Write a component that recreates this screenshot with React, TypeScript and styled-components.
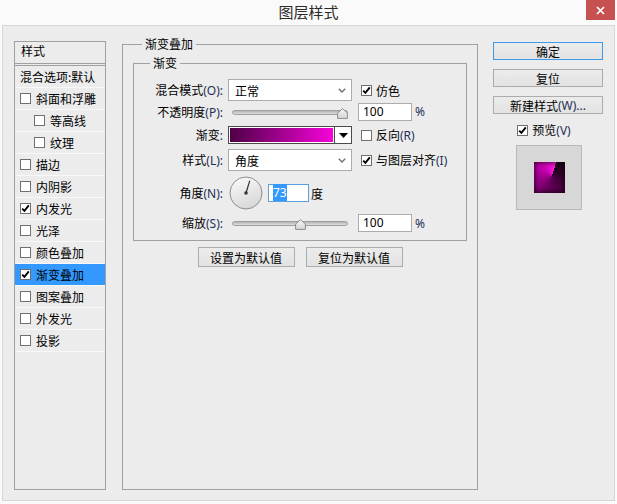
import React from 'react';
import styled, { createGlobalStyle } from 'styled-components';

const GlobalStyle = createGlobalStyle`
  html, body {
    margin: 0;
    padding: 0;
    background: #fafafa;
  }
  body {
    width: 617px;
    height: 504px;
    overflow: hidden;
    font-family: 'Noto Sans CJK SC', 'Noto Sans', sans-serif;
    font-size: 12px;
    color: #000;
  }
  * {
    box-sizing: border-box;
  }
`;

const Frame = styled.div`
  width: 617px;
  height: 504px;
  display: flex;
  flex-direction: column;
`;

const TitleBar = styled.div`
  height: 25px;
  display: grid;
  grid-template-columns: 1fr auto 1fr;
  align-items: start;
`;

const Title = styled.div`
  grid-column: 2;
  font-size: 15px;
  line-height: 24px;
  color: #2b2b2b;
`;

const CloseButton = styled.div`
  justify-self: end;
  width: 29px;
  height: 20px;
  margin-right: 2px;
  background: #c75050;
  display: flex;
  align-items: center;
  justify-content: center;
`;

const Body = styled.div`
  flex: 1;
  margin: 0 2px 3px;
  border: 1px solid #d6d6d6;
  background: #ececec;
  display: flex;
  align-items: flex-start;
  padding: 10px 0 0 11px;
`;

/* left list of effects */

const StyleList = styled.div`
  width: 92px;
  height: 449px;
  margin-top: 5px;
  border: 1px solid #a0a0a0;
  display: flex;
  flex-direction: column;
  overflow: hidden;
`;

const ListHeader = styled.div`
  height: 24px;
  line-height: 18px;
  padding-left: 6px;
  border-bottom: 3px double #a0a0a0;
`;

const ListRow = styled.div<{ $indent: number; $selected?: boolean }>`
  height: 22px;
  flex-shrink: 0;
  display: flex;
  align-items: center;
  gap: 5px;
  padding-left: ${p => p.$indent}px;
  border-bottom: 1px solid #f8f8f8;
  background: ${p => (p.$selected ? '#3399ff' : 'transparent')};
  white-space: nowrap;
  overflow: hidden;
`;

const Box = styled.span`
  width: 11px;
  height: 11px;
  flex-shrink: 0;
  border: 1px solid #707070;
  background: #fff;
  display: flex;
  align-items: center;
  justify-content: center;
`;

// accelerator keys and other latin bits, drawn in a latin face so they sit tight
const Acc = styled.span`
  font-family: 'Noto Sans', 'Liberation Sans', sans-serif;
  color: #1f2f55;
`;

const CheckBox = ({ checked }: { checked?: boolean }) => (
  <Box>
    {checked && (
      <svg width="9" height="9" viewBox="0 0 9 9">
        <path d="M1.2 4.6 L3.4 6.9 L7.8 1.4" fill="none" stroke="#000" strokeWidth="1.9" />
      </svg>
    )}
  </Box>
);

/* fieldsets */

const EffectGroup = styled.fieldset`
  margin: 0 0 0 16px;
  padding: 0 10px;
  width: 356px;
  height: 454px;
  min-inline-size: 0;
  border: 1px solid #a0a0a0;
`;

const GradientGroup = styled.fieldset`
  margin: 3px 0 0;
  padding: 8px 0;
  min-inline-size: 0;
  border: 1px solid #a0a0a0;
`;

const GroupLegend = styled.legend<{ $offset: number }>`
  margin-left: ${p => p.$offset}px;
  padding: 0 3px;
  font-size: 12px;
  line-height: 16px;
`;

const FormGrid = styled.div`
  display: grid;
  grid-template-columns: 94px 130px 1fr;
  grid-template-rows: 22px 21px 26px 24px 42px 18px;
  align-items: center;
`;

const FieldLabel = styled.div`
  text-align: right;
  padding-right: 5px;
  white-space: nowrap;
`;

const Cell = styled.div<{ $gap?: number }>`
  display: flex;
  align-items: center;
  gap: ${p => p.$gap ?? 3}px;
  white-space: nowrap;
`;

const Select = styled.div`
  width: 124px;
  height: 22px;
  background: #fff;
  border: 1px solid #acacac;
  display: flex;
  align-items: center;
  justify-content: space-between;
  padding: 0 5px 0 6px;
`;

const Chevron = () => (
  <svg width="8" height="5" viewBox="0 0 8 5">
    <path d="M0.8 0.8 L4 4 L7.2 0.8" fill="none" stroke="#6d6d6d" strokeWidth="1.3" />
  </svg>
);

const Slider = styled.div`
  position: relative;
  width: 116px;
  height: 12px;
  margin: 4px 0 0 4px;
`;

const Track = styled.div`
  margin-top: 2px;
  height: 5px;
  border-radius: 3px;
  border: 1px solid #a0a0a0;
  background: linear-gradient(#b4b4b4, #dedede);
`;

const Thumb = styled.svg`
  position: absolute;
  top: 0;
`;

const SliderControl = ({ pos }: { pos: number }) => (
  <Slider>
    <Track />
    <Thumb width="11" height="11" viewBox="0 0 11 11" style={{ left: `${pos * (116 - 11)}px` }}>
      <defs>
        <linearGradient id="thumbFill" x1="0" y1="0" x2="0" y2="1">
          <stop offset="0" stopColor="#f4f4f4" />
          <stop offset="1" stopColor="#d6d6d6" />
        </linearGradient>
      </defs>
      <polygon
        points="5.5,0.6 10.4,5 10.4,10.4 0.6,10.4 0.6,5"
        fill="url(#thumbFill)"
        stroke="#8c8c8c"
        strokeWidth="1"
      />
    </Thumb>
  </Slider>
);

const NumberBox = styled.div<{ $width: number; $focused?: boolean }>`
  width: ${p => p.$width}px;
  height: 18px;
  background: #fff;
  border: 1px solid ${p => (p.$focused ? '#5b9ee0' : '#acacac')};
  line-height: 16px;
  padding-left: 4px;
  font-family: 'Noto Sans', 'Liberation Sans', sans-serif;
`;

const Selected = styled.span`
  background: #3399ff;
  color: #fff;
`;

const GradientPicker = styled.div`
  width: 124px;
  height: 18px;
  display: flex;
  border: 1px solid #4a4a4a;
`;

const GradientBar = styled.div`
  flex: 1;
  border: 1px solid #fff;
  background: linear-gradient(to right, #4e0046, #f604da);
`;

const GradientArrow = styled.div`
  width: 17px;
  border-left: 1px solid #4a4a4a;
  background: #fff;
  display: flex;
  align-items: center;
  justify-content: center;
`;

const CheckLabel = styled.div`
  display: flex;
  align-items: center;
  gap: 4px;
  margin-left: 3px;
  white-space: nowrap;
`;

const Unit = styled.span`
  margin-left: -3px;
`;

const AngleDial = ({ angle }: { angle: number }) => {
  const r = (angle * Math.PI) / 180;
  const x = 17 + Math.cos(r) * 13;
  const y = 17 - Math.sin(r) * 13;
  return (
    <svg width="34" height="34" viewBox="0 0 34 34" style={{ marginLeft: 1 }}>
      <defs>
        <linearGradient id="dialFill" x1="0" y1="0" x2="0.4" y2="1">
          <stop offset="0" stopColor="#fbfbfb" />
          <stop offset="1" stopColor="#d9d9d9" />
        </linearGradient>
      </defs>
      <circle cx="17" cy="17" r="16" fill="url(#dialFill)" stroke="#8d8d8d" />
      <line x1="17" y1="17" x2={x} y2={y} stroke="#333" strokeWidth="1.2" />
      <circle cx="17" cy="17" r="1.8" fill="#333" />
    </svg>
  );
};

const ButtonRow = styled.div`
  display: flex;
  justify-content: center;
  gap: 11px;
  margin-top: 6px;
`;

const DialogButton = styled.div<{ $width: number; $height?: number; $primary?: boolean }>`
  width: ${p => p.$width}px;
  height: ${p => p.$height ?? 18}px;
  border: 1px solid ${p => (p.$primary ? '#3c9ae8' : '#acacac')};
  background: linear-gradient(#ececec, #e2e2e2);
  display: flex;
  align-items: center;
  justify-content: center;
  white-space: nowrap;
`;

/* right column */

const SideColumn = styled.div`
  width: 110px;
  margin: 6px 0 0 15px;
  display: flex;
  flex-direction: column;
  align-items: center;
  gap: 9px;
`;

const PreviewCheck = styled.div`
  display: flex;
  align-items: center;
  gap: 4px;
  height: 14px;
  margin-right: 8px;
`;

const PreviewFrame = styled.div`
  width: 66px;
  height: 65px;
  margin: -1px 0 0 2px;
  background: #d7d7d7;
  border: 1px solid #b8b8b8;
  display: flex;
  align-items: center;
  justify-content: center;
`;

const PreviewSwatch = styled.div`
  width: 31px;
  height: 31px;
  background: conic-gradient(from 17deg at 58% 45%, #1a0016, #5a0050 45%, #c000aa 80%, #ff18e2);
  box-shadow: inset 0 0 5px 1px rgba(0, 0, 0, 0.7);
`;

const effects = [
  { name: '斜面和浮雕', indent: 5 },
  { name: '等高线', indent: 19 },
  { name: '纹理', indent: 19 },
  { name: '描边', indent: 5 },
  { name: '内阴影', indent: 5 },
  { name: '内发光', indent: 5, checked: true },
  { name: '光泽', indent: 5 },
  { name: '颜色叠加', indent: 5 },
  { name: '渐变叠加', indent: 5, checked: true, selected: true },
  { name: '图案叠加', indent: 5 },
  { name: '外发光', indent: 5 },
  { name: '投影', indent: 5 },
];

export default function App() {
  return (
    <Frame>
      <GlobalStyle />
      <TitleBar>
        <Title>图层样式</Title>
        <CloseButton>
          <svg width="9" height="9" viewBox="0 0 9 9">
            <path d="M1 1 L8 8 M8 1 L1 8" stroke="#fff" strokeWidth="1.7" />
          </svg>
        </CloseButton>
      </TitleBar>

      <Body>
        <StyleList>
          <ListHeader>样式</ListHeader>
          <ListRow $indent={5}>混合选项:默认</ListRow>
          {effects.map(e => (
            <ListRow key={e.name} $indent={e.indent} $selected={e.selected}>
              <CheckBox checked={e.checked} />
              {e.name}
            </ListRow>
          ))}
        </StyleList>

        <EffectGroup>
          <GroupLegend $offset={9}>渐变叠加</GroupLegend>
          <GradientGroup>
            <GroupLegend $offset={16}>渐变</GroupLegend>
            <FormGrid>
              <FieldLabel>
                混合模式<Acc>(O):</Acc>
              </FieldLabel>
              <Cell>
                <Select>
                  正常
                  <Chevron />
                </Select>
              </Cell>
              <Cell>
                <CheckLabel>
                  <CheckBox checked />
                  仿色
                </CheckLabel>
              </Cell>

              <FieldLabel>
                不透明度<Acc>(P):</Acc>
              </FieldLabel>
              <Cell>
                <SliderControl pos={1} />
              </Cell>
              <Cell>
                <NumberBox $width={54}>100</NumberBox>
                <Acc>%</Acc>
              </Cell>

              <FieldLabel>
                渐变<Acc>:</Acc>
              </FieldLabel>
              <Cell>
                <GradientPicker>
                  <GradientBar />
                  <GradientArrow>
                    <svg width="9" height="5" viewBox="0 0 9 5">
                      <polygon points="0,0 9,0 4.5,5" fill="#000" />
                    </svg>
                  </GradientArrow>
                </GradientPicker>
              </Cell>
              <Cell>
                <CheckLabel>
                  <CheckBox />
                  <span>
                    反向<Acc>(R)</Acc>
                  </span>
                </CheckLabel>
              </Cell>

              <FieldLabel>
                样式<Acc>(L):</Acc>
              </FieldLabel>
              <Cell>
                <Select>
                  角度
                  <Chevron />
                </Select>
              </Cell>
              <Cell>
                <CheckLabel>
                  <CheckBox checked />
                  <span>
                    与图层对齐<Acc>(I)</Acc>
                  </span>
                </CheckLabel>
              </Cell>

              <FieldLabel>
                角度<Acc>(N):</Acc>
              </FieldLabel>
              <Cell $gap={5}>
                <AngleDial angle={73} />
                <NumberBox $width={41} $focused>
                  <Selected>73</Selected>
                </NumberBox>
                <Unit>度</Unit>
              </Cell>
              <div />

              <FieldLabel>
                缩放<Acc>(S):</Acc>
              </FieldLabel>
              <Cell>
                <SliderControl pos={0.6} />
              </Cell>
              <Cell>
                <NumberBox $width={54}>100</NumberBox>
                <Acc>%</Acc>
              </Cell>
            </FormGrid>
          </GradientGroup>
          <ButtonRow>
            <DialogButton $width={97} $height={20}>设置为默认值</DialogButton>
            <DialogButton $width={97} $height={20}>复位为默认值</DialogButton>
          </ButtonRow>
        </EffectGroup>

        <SideColumn>
          <DialogButton $width={110} $primary>确定</DialogButton>
          <DialogButton $width={110}>复位</DialogButton>
          <DialogButton $width={110}>
            新建样式<Acc>(W)...</Acc>
          </DialogButton>
          <PreviewCheck>
            <CheckBox checked />
            <span>
              预览<Acc>(V)</Acc>
            </span>
          </PreviewCheck>
          <PreviewFrame>
            <PreviewSwatch />
          </PreviewFrame>
        </SideColumn>
      </Body>
    </Frame>
  );
}
